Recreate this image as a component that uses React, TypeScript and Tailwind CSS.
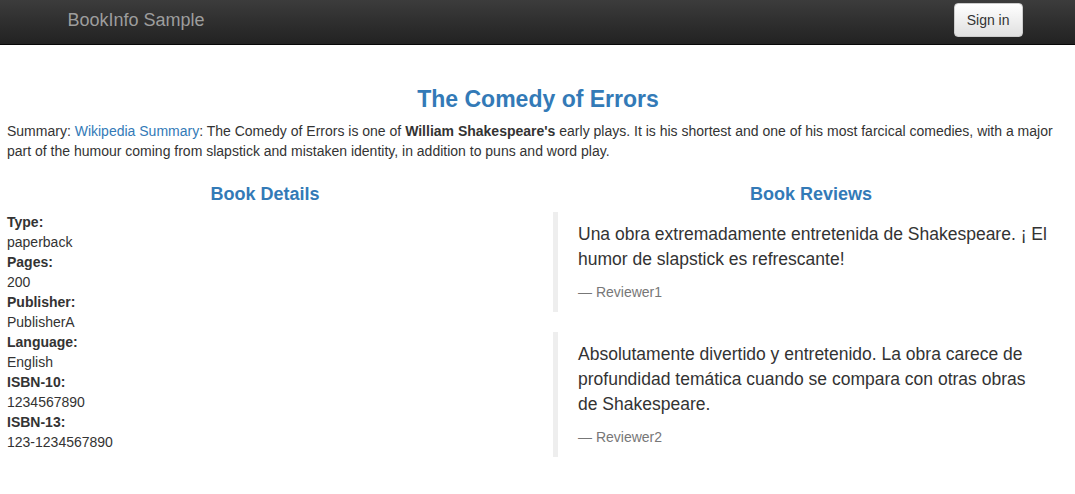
import React from "react";

const details: [string, string][] = [
  ["Type:", "paperback"],
  ["Pages:", "200"],
  ["Publisher:", "PublisherA"],
  ["Language:", "English"],
  ["ISBN-10:", "1234567890"],
  ["ISBN-13:", "123-1234567890"],
];

const reviews = [
  {
    text: "Una obra extremadamente entretenida de Shakespeare. ¡ El humor de slapstick es refrescante!",
    who: "Reviewer1",
  },
  {
    text: "Absolutamente divertido y entretenido. La obra carece de profundidad temática cuando se compara con otras obras de Shakespeare.",
    who: "Reviewer2",
  },
];

export default function App() {
  return (
    <div
      className="min-h-screen bg-white text-[#333] text-[14px] leading-[20px]"
      style={{ fontFamily: '"Liberation Sans", Arial, Helvetica, sans-serif' }}
    >
      <nav className="h-[45px] bg-gradient-to-b from-[#3c3c3c] to-[#222222] border-b border-[#080808]">
        <div className="mx-auto w-[970px] px-[15px] h-full flex items-start justify-between">
          <a className="text-[18px] leading-[20px] text-[#9d9d9d] mt-[10px]">BookInfo Sample</a>
          <button className="mt-[3px] -mr-[15px] h-[34px] px-[12px] rounded-[4px] border border-[#ccc] bg-gradient-to-b from-white to-[#e0e0e0] text-[14px] text-[#333] leading-[20px]">
            Sign in
          </button>
        </div>
      </nav>

      <div className="px-[7px] pr-[6px]">
        <h3 className="mt-[41px] mb-[9px] text-center text-[23px] leading-[26.4px] font-bold text-[#337ab7]">
          The Comedy of Errors
        </h3>
        <p className="mb-[24px]">
          Summary: <a className="text-[#337ab7]">Wikipedia Summary</a>: The Comedy of Errors is one of{" "}
          <b>William Shakespeare's</b> early plays. It is his shortest and one of his most farcical comedies, with a
          major part of the humour coming from slapstick and mistaken identity, in addition to puns and word play.
        </p>

        <div className="grid grid-cols-2 gap-[30px]">
          <div>
            <h4 className="text-center text-[18px] leading-[19.8px] font-bold text-[#337ab7] mb-[7px]">Book Details</h4>
            <dl>
              {details.map(([k, v]) => (
                <React.Fragment key={k}>
                  <dt className="font-bold">{k}</dt>
                  <dd>{v}</dd>
                </React.Fragment>
              ))}
            </dl>
          </div>
          <div>
            <h4 className="text-center text-[18px] leading-[19.8px] font-bold text-[#337ab7] mb-[7px]">Book Reviews</h4>
            {reviews.map((r) => (
              <blockquote key={r.who} className="border-l-[5px] border-[#eee] px-[20px] py-[10px] mb-[20px]">
                <p className="text-[17.5px] leading-[25px] mb-[10px]">{r.text}</p>
                <footer className="text-[14px] leading-[20px] text-[#777]">— {r.who}</footer>
              </blockquote>
            ))}
          </div>
        </div>
      </div>
    </div>
  );
}
